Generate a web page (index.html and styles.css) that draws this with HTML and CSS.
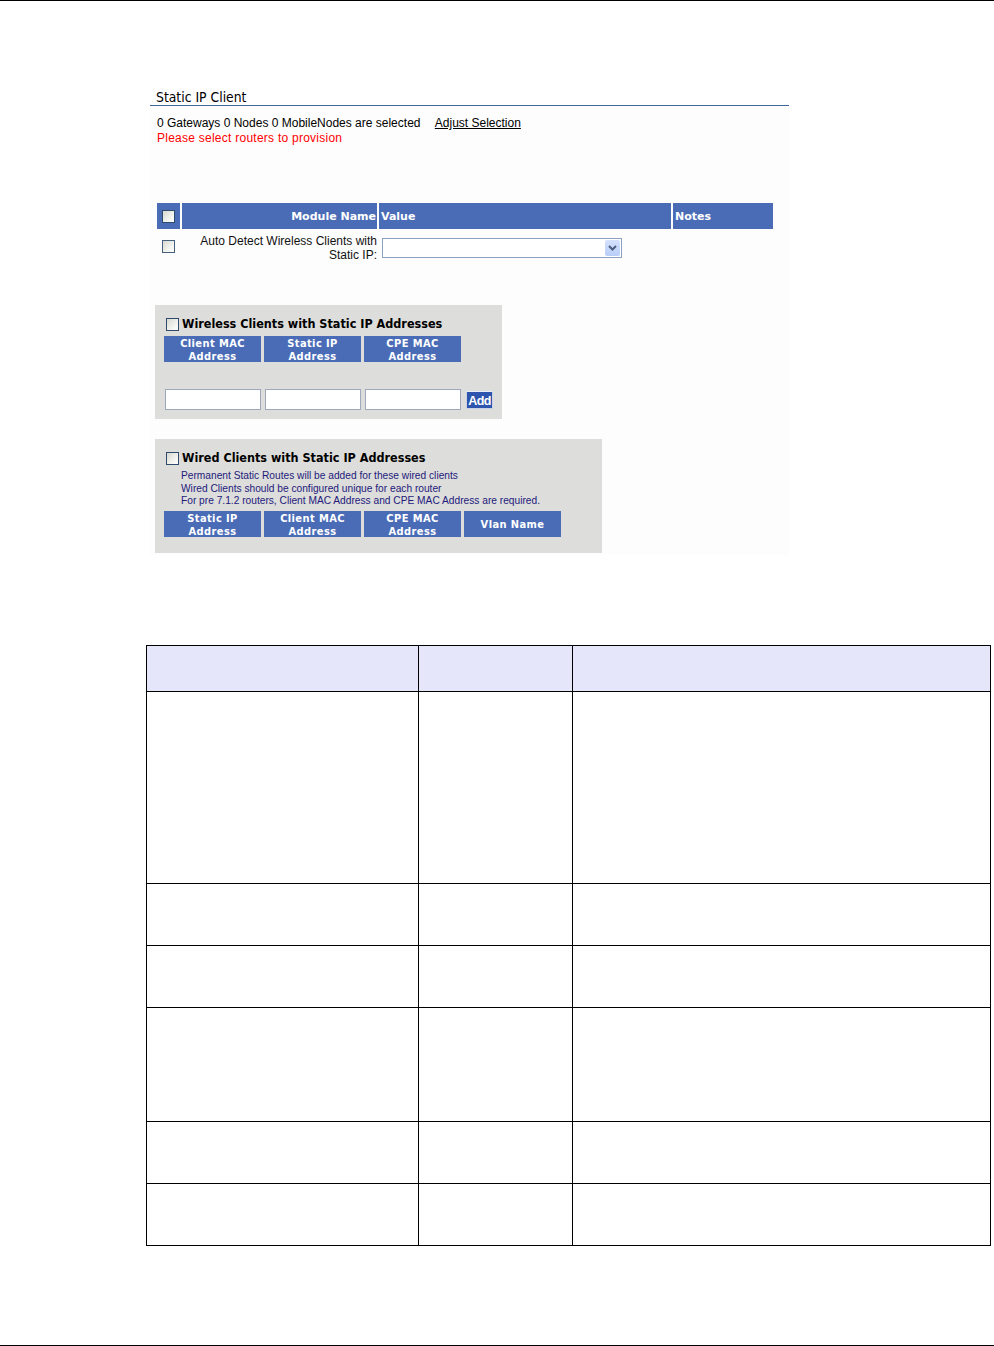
FILE: index.html
```html
<!DOCTYPE html>
<html>
<head>
<meta charset="utf-8">
<title>Static IP Client</title>
<link rel="stylesheet" href="styles.css">
</head>
<body>
<div class="topline"></div>
<div class="shot">
  <div class="title">Static IP Client</div>
  <div class="sel">0 Gateways 0 Nodes 0 MobileNodes are selected <a class="adjust" href="#">Adjust Selection</a></div>
  <div class="warn">Please select routers to provision</div>

  <div class="mod">
    <div class="mh cbcell"><span class="cb"></span></div>
    <div class="mh name">Module Name</div>
    <div class="mh">Value</div>
    <div class="mh">Notes</div>
    <div class="mr cbcell"><span class="cb"></span></div>
    <div class="mr name label">Auto Detect Wireless Clients with<br>Static IP:</div>
    <div class="mr"><span class="select"><span class="dd"><svg width="9" height="6" viewBox="0 0 9 6"><path d="M1 1 L4.5 4.5 L8 1" fill="none" stroke="#4d5d80" stroke-width="2"/></svg></span></span></div>
    <div class="mr"></div>
  </div>

  <div class="box wireless">
    <div class="btitle"><span class="cb"></span>Wireless Clients with Static IP Addresses</div>
    <div class="cols">
      <div class="ch">Client MAC<br>Address</div>
      <div class="ch">Static IP<br>Address</div>
      <div class="ch">CPE MAC<br>Address</div>
    </div>
    <div class="inputs">
      <span class="inp"></span>
      <span class="inp"></span>
      <span class="inp"></span>
      <span class="add">Add</span>
    </div>
  </div>

  <div class="box wired">
    <div class="btitle"><span class="cb"></span>Wired Clients with Static IP Addresses</div>
    <div class="notes">
      <div>Permanent Static Routes will be added for these wired clients</div>
      <div>Wired Clients should be configured unique for each router</div>
      <div>For pre 7.1.2 routers, Client MAC Address and CPE MAC Address are required.</div>
    </div>
    <div class="cols">
      <div class="ch">Static IP<br>Address</div>
      <div class="ch">Client MAC<br>Address</div>
      <div class="ch">CPE MAC<br>Address</div>
      <div class="ch">Vlan Name</div>
    </div>
  </div>
</div>

<table class="doc">
  <tr class="hd"><td class="c1"></td><td class="c2"></td><td class="c3"></td></tr>
  <tr class="r1"><td></td><td></td><td></td></tr>
  <tr class="r2"><td></td><td></td><td></td></tr>
  <tr class="r2"><td></td><td></td><td></td></tr>
  <tr class="r3"><td></td><td></td><td></td></tr>
  <tr class="r2"><td></td><td></td><td></td></tr>
  <tr class="r2"><td></td><td></td><td></td></tr>
</table>
<div class="bottomline"></div>
</body>
</html>
```

FILE: styles.css
```css
html, body {
  margin: 0;
  padding: 0;
  background: #ffffff;
}
body {
  width: 994px;
  height: 1346px;
  position: relative;
  font-family: "Liberation Sans", Arial, sans-serif;
  color: #000;
}
.topline {
  height: 1px;
  background: #000;
}
.bottomline {
  height: 1px;
  background: #000;
  margin-top: 99px;
}
.shot {
  margin: 85px 0 0 150px;
  width: 639px;
  height: 469px;
  background: #fdfdfd;
  box-sizing: border-box;
}
.title {
  font-family: "DejaVu Sans Condensed", "DejaVu Sans", sans-serif;
  font-size: 13.8px;
  line-height: 15px;
  height: 15px;
  padding: 4px 0 0 6px;
  border-bottom: 1px solid #41679a;
  background: #fff;
}
.sel {
  margin-top: 10px;
  padding-left: 7px;
  font-size: 12px;
  line-height: 15px;
}
.adjust {
  color: #000;
  margin-left: 11px;
  text-decoration: underline;
}
.warn {
  padding-left: 7px;
  font-size: 12px;
  line-height: 15px;
  letter-spacing: 0.25px;
  color: #ff0000;
}
.mod {
  margin: 57px 0 0 7px;
  display: grid;
  grid-template-columns: 23px 195px 292px 100px;
  column-gap: 2px;
}
.mh {
  background: #4a6cb7;
  color: #fff;
  height: 26px;
  font-family: "DejaVu Sans", Verdana, sans-serif;
  font-weight: bold;
  font-size: 11px;
  line-height: 28px;
  padding-left: 2px;
}
.mh.name {
  text-align: right;
  padding: 0 1px 0 0;
}
.cbcell {
  display: flex;
  align-items: center;
  justify-content: center;
  padding: 0;
}
.cb {
  display: inline-block;
  width: 11px;
  height: 11px;
  border: 1px solid #2f4a6a;
  background: linear-gradient(135deg, #d8d8d2 0%, #f2f2ee 60%, #ffffff 100%);
  flex: none;
}
.mr {
  margin-top: 2px;
  height: 32px;
}
.mr.cbcell {
  align-items: flex-start;
  padding-top: 9px;
  height: 23px;
}
.mr.cbcell .cb {
  border-color: #44607c;
}
.label {
  font-size: 12px;
  line-height: 14px;
  text-align: right;
  padding-top: 3px;
  height: 29px;
  color: #111;
}
.select {
  display: block;
  margin-top: 7px;
  margin-left: 3px;
  width: 238px;
  height: 18px;
  border: 1px solid #8aa2bf;
  background: #fff;
  position: relative;
}
.dd {
  position: absolute;
  right: 1px;
  top: 1px;
  width: 15px;
  height: 16px;
  background: linear-gradient(180deg, #d6e2fd 0%, #b8cdf8 100%);
  border-radius: 2px;
  display: flex;
  align-items: center;
  justify-content: center;
}
.box {
  margin-left: 5px;
  background: #dddddb;
  box-sizing: border-box;
  height: 114px;
  padding: 12px 0 0 9px;
}
.wireless {
  margin-top: 42px;
  width: 347px;
}
.wired {
  margin-top: 20px;
  width: 447px;
}
.btitle {
  display: flex;
  align-items: center;
  gap: 3px;
  padding-left: 2px;
  font-family: "DejaVu Sans Condensed", "DejaVu Sans", sans-serif;
  font-weight: bold;
  font-size: 12.5px;
  line-height: 14px;
  height: 14px;
}
.cols {
  display: flex;
  gap: 3px;
  margin-top: 5px;
}
.ch {
  width: 97px;
  height: 26px;
  box-sizing: border-box;
  background: #4a6cb7;
  color: #fff;
  font-family: "DejaVu Sans Condensed", "DejaVu Sans", sans-serif;
  font-weight: bold;
  font-size: 11px;
  letter-spacing: 0.4px;
  line-height: 12.5px;
  text-align: center;
  display: flex;
  align-items: center;
  justify-content: center;
  padding-top: 3px;
}
.inputs {
  display: flex;
  align-items: center;
  margin-top: 27px;
  margin-left: 1px;
  gap: 4px;
}
.inp {
  display: block;
  width: 94px;
  height: 19px;
  background: #fff;
  border: 1px solid #9eaabb;
}
.add {
  display: block;
  margin-left: 1px;
  width: 27px;
  height: 18px;
  background: #2d55ad;
  color: #fff;
  font-weight: bold;
  font-size: 12.5px;
  line-height: 19px;
  text-align: center;
  letter-spacing: -0.6px;
  box-sizing: border-box;
  border: 1px solid #c8d2e6;
  border-top-color: #e8eef8;
}
.notes {
  margin-top: 5px;
  padding-left: 17px;
  color: #231a7c;
  font-size: 10.2px;
  line-height: 12.5px;
}
.wired .cols {
  margin-top: 3px;
}
.wired .ch {
  padding-top: 4px;
}
.doc {
  margin: 90px 0 0 146px;
  width: 845px;
  border-collapse: collapse;
  table-layout: fixed;
}
.doc td {
  border: 1px solid #000;
  padding: 0;
}
.doc .c1 { width: 271px; }
.doc .c2 { width: 153px; }
.doc .hd td {
  background: #e6e6fa;
  height: 45px;
}
.doc .r1 td { height: 191px; }
.doc .r2 td { height: 61px; }
.doc .r3 td { height: 113px; }
```
